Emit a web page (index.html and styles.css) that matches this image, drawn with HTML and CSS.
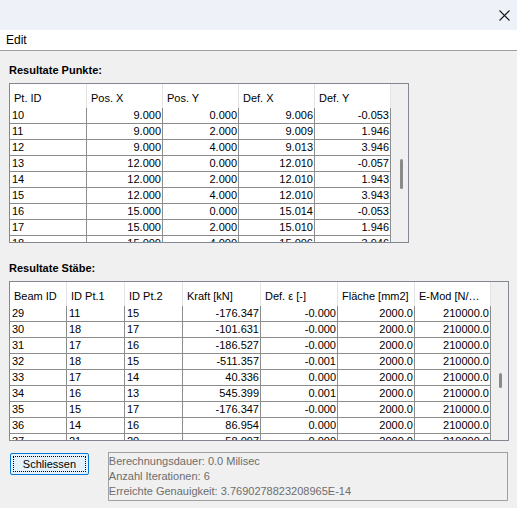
FILE: index.html
```html
<!DOCTYPE html>
<html lang="de">
<head>
    <meta charset="UTF-8">
    <title>Resultate</title>
    <link rel="stylesheet" href="styles.css">
</head>
<body>
    <div class="titlebar">
        <svg class="close-icon" width="11" height="11" viewBox="0 0 11 11">
            <path d="M0.5 0.5 L10.5 10.5 M10.5 0.5 L0.5 10.5" stroke="#1a1a1a" stroke-width="1.1" fill="none"/>
        </svg>
    </div>
    <div class="menubar"><span class="menu-item">Edit</span></div>

    <div class="content">
        <div class="section-label">Resultate Punkte:</div>
        <div class="table-box pts">
            <div class="grid">
                <div class="row head">
                    <div class="hcell">Pt. ID</div>
                    <div class="hcell">Pos. X</div>
                    <div class="hcell">Pos. Y</div>
                    <div class="hcell">Def. X</div>
                    <div class="hcell">Def. Y</div>
                </div>
                <div class="row"><div class="cell">10</div><div class="cell num">9.000</div><div class="cell num">0.000</div><div class="cell num">9.006</div><div class="cell num">-0.053</div></div>
                <div class="row"><div class="cell">11</div><div class="cell num">9.000</div><div class="cell num">2.000</div><div class="cell num">9.009</div><div class="cell num">1.946</div></div>
                <div class="row"><div class="cell">12</div><div class="cell num">9.000</div><div class="cell num">4.000</div><div class="cell num">9.013</div><div class="cell num">3.946</div></div>
                <div class="row"><div class="cell">13</div><div class="cell num">12.000</div><div class="cell num">0.000</div><div class="cell num">12.010</div><div class="cell num">-0.057</div></div>
                <div class="row"><div class="cell">14</div><div class="cell num">12.000</div><div class="cell num">2.000</div><div class="cell num">12.010</div><div class="cell num">1.943</div></div>
                <div class="row"><div class="cell">15</div><div class="cell num">12.000</div><div class="cell num">4.000</div><div class="cell num">12.010</div><div class="cell num">3.943</div></div>
                <div class="row"><div class="cell">16</div><div class="cell num">15.000</div><div class="cell num">0.000</div><div class="cell num">15.014</div><div class="cell num">-0.053</div></div>
                <div class="row"><div class="cell">17</div><div class="cell num">15.000</div><div class="cell num">2.000</div><div class="cell num">15.010</div><div class="cell num">1.946</div></div>
                <div class="row"><div class="cell">18</div><div class="cell num">15.000</div><div class="cell num">4.000</div><div class="cell num">15.006</div><div class="cell num">3.946</div></div>
            </div>
            <div class="vscroll"><div class="thumb"></div></div>
        </div>

        <div class="section-label second">Resultate Stäbe:</div>
        <div class="table-box bars">
            <div class="grid">
                <div class="row head">
                    <div class="hcell">Beam ID</div>
                    <div class="hcell">ID Pt.1</div>
                    <div class="hcell">ID Pt.2</div>
                    <div class="hcell">Kraft [kN]</div>
                    <div class="hcell">Def. ε [-]</div>
                    <div class="hcell">Fläche [mm2]</div>
                    <div class="hcell">E-Mod [N/…</div>
                </div>
                <div class="row"><div class="cell">29</div><div class="cell">11</div><div class="cell">15</div><div class="cell num">-176.347</div><div class="cell num">-0.000</div><div class="cell num">2000.0</div><div class="cell num">210000.0</div></div>
                <div class="row"><div class="cell">30</div><div class="cell">18</div><div class="cell">17</div><div class="cell num">-101.631</div><div class="cell num">-0.000</div><div class="cell num">2000.0</div><div class="cell num">210000.0</div></div>
                <div class="row"><div class="cell">31</div><div class="cell">17</div><div class="cell">16</div><div class="cell num">-186.527</div><div class="cell num">-0.000</div><div class="cell num">2000.0</div><div class="cell num">210000.0</div></div>
                <div class="row"><div class="cell">32</div><div class="cell">18</div><div class="cell">15</div><div class="cell num">-511.357</div><div class="cell num">-0.001</div><div class="cell num">2000.0</div><div class="cell num">210000.0</div></div>
                <div class="row"><div class="cell">33</div><div class="cell">17</div><div class="cell">14</div><div class="cell num">40.336</div><div class="cell num">0.000</div><div class="cell num">2000.0</div><div class="cell num">210000.0</div></div>
                <div class="row"><div class="cell">34</div><div class="cell">16</div><div class="cell">13</div><div class="cell num">545.399</div><div class="cell num">0.001</div><div class="cell num">2000.0</div><div class="cell num">210000.0</div></div>
                <div class="row"><div class="cell">35</div><div class="cell">15</div><div class="cell">17</div><div class="cell num">-176.347</div><div class="cell num">-0.000</div><div class="cell num">2000.0</div><div class="cell num">210000.0</div></div>
                <div class="row"><div class="cell">36</div><div class="cell">14</div><div class="cell">16</div><div class="cell num">86.954</div><div class="cell num">0.000</div><div class="cell num">2000.0</div><div class="cell num">210000.0</div></div>
                <div class="row"><div class="cell">37</div><div class="cell">21</div><div class="cell">20</div><div class="cell num">-58.097</div><div class="cell num">0.000</div><div class="cell num">2000.0</div><div class="cell num">210000.0</div></div>
            </div>
            <div class="vscroll"><div class="thumb"></div></div>
        </div>

        <div class="footer">
            <button class="btn"><span class="btn-focus">Schliessen</span></button>
            <div class="info-box">
                <div>Berechnungsdauer: 0.0 Milisec</div>
                <div>Anzahl Iterationen: 6</div>
                <div>Erreichte Genauigkeit: 3.7690278823208965E-14</div>
            </div>
        </div>
    </div>
</body>
</html>
```

FILE: styles.css
```css
* {
    margin: 0;
    padding: 0;
    box-sizing: border-box;
}

body {
    background: #f0f0f0;
    color: #000;
    font-family: 'Liberation Sans', Arial, sans-serif;
    font-size: 11px;
    width: 517px;
    height: 508px;
    overflow: hidden;
}

/* Window chrome */
.titlebar {
    height: 30px;
    background: #eef1f8;
    display: flex;
    justify-content: flex-end;
    align-items: center;
    padding-right: 7px;
}

.close-icon {
    display: block;
}

.menubar {
    height: 21px;
    background: #fff;
    border-bottom: 1px solid #a0a0a0;
    font-size: 12px;
    line-height: 20px;
}

.menu-item {
    padding-left: 6px;
}

.content {
    padding: 0 9px;
}

.section-label {
    font-weight: bold;
    font-size: 11px;
    line-height: 16px;
    margin-top: 11px;
    margin-bottom: 5px;
}

.section-label.second {
    margin-top: 17px;
}

/* Tables */
.table-box {
    height: 160px;
    border: 1px solid #828790;
    display: flex;
    background: #f0f0f0;
}

.table-box.pts {
    width: 400px;
}

.table-box.bars {
    width: 500px;
}

.grid {
    overflow: hidden;
    background: #fff;
}

.row {
    display: grid;
    height: 16px;
}

.pts .row {
    grid-template-columns: 77px 76px 76px 76px 76px;
}

.bars .row {
    grid-template-columns: 57px 58px 58px 78px 77px 77px 76px;
}

.row.head {
    height: 24px;
}

.hcell {
    border-right: 1px solid #e3e3e3;
    padding: 7px 0 0 4px;
    line-height: 14px;
    white-space: nowrap;
    overflow: hidden;
}

.cell {
    border-right: 1px solid #8c8c8c;
    border-bottom: 1px solid #8c8c8c;
    line-height: 15px;
    padding: 0 1px 0 2px;
    white-space: nowrap;
    overflow: hidden;
}

.cell.num {
    text-align: right;
}

.vscroll {
    flex: 1;
    background: #f0f0f0;
}

.thumb {
    width: 3px;
    border-radius: 2px;
    background: #8a8a8a;
}

.pts .thumb {
    margin: 75px 0 0 9px;
    height: 30px;
}

.bars .thumb {
    margin: 91px 0 0 8px;
    height: 15px;
}

/* Footer */
.footer {
    display: flex;
    margin-top: 11px;
}

.btn {
    width: 79px;
    height: 22px;
    margin: 1px 19px 0 1px;
    background: #e5f1fb;
    border: 1px solid #0078d7;
    border-radius: 2px;
    padding: 2px;
    font-family: 'Liberation Sans', Arial, sans-serif;
    font-size: 11px;
    color: #000;
}

.btn-focus {
    display: flex;
    height: 100%;
    align-items: center;
    justify-content: center;
    border: 1px dotted #000;
}

.info-box {
    width: 401px;
    height: 49px;
    border: 1px solid #a0a0a0;
    color: #6d6d6d;
    line-height: 15px;
    padding-top: 1px;
}
```
